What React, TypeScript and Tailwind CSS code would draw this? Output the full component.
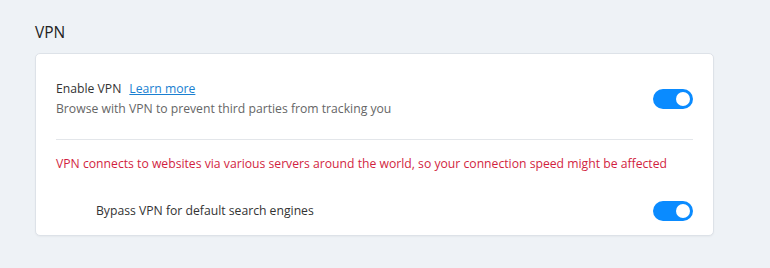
function Toggle() {
  return (
    <button
      type="button"
      aria-pressed="true"
      className="flex h-5 w-10 shrink-0 items-center justify-end rounded-full bg-[#0a8bff] pr-[3px]"
    >
      <span className="h-[14px] w-[14px] rounded-full bg-white" />
    </button>
  )
}

export default function App() {
  return (
    <div className="min-h-[268px] w-[770px] bg-[#eef2f6] pl-[35px] pt-[22px] font-['Open_Sans',sans-serif] text-[#333]">
      <h1 className="mb-[11px] text-[15.5px] leading-[20px] text-[#222]">VPN</h1>

      <div className="w-[679px] rounded-[5px] border border-[#dde2e8] bg-white px-5 pb-[14px] pt-[25px] shadow-[0_1px_2px_rgba(0,0,0,0.04)]">
        <div className="flex items-center justify-between pb-[20px]">
          <div className="text-[12.2px] leading-[20px]">
            <p>
              Enable VPN
              <a href="#" className="ml-2 text-[#1a7fd1] underline">
                Learn more
              </a>
            </p>
            <p className="text-[#666]">Browse with VPN to prevent third parties from tracking you</p>
          </div>
          <Toggle />
        </div>

        <div className="border-t border-[#e3e6ea]" />

        <p className="pt-[14px] text-[12.2px] leading-[20px] text-[#d21f3f]">
          VPN connects to websites via various servers around the world, so your connection speed might be affected
        </p>

        <div className="flex items-center justify-between pl-10 pt-[27px]">
          <span className="text-[12.2px] leading-[20px]">Bypass VPN for default search engines</span>
          <Toggle />
        </div>
      </div>
    </div>
  )
}
